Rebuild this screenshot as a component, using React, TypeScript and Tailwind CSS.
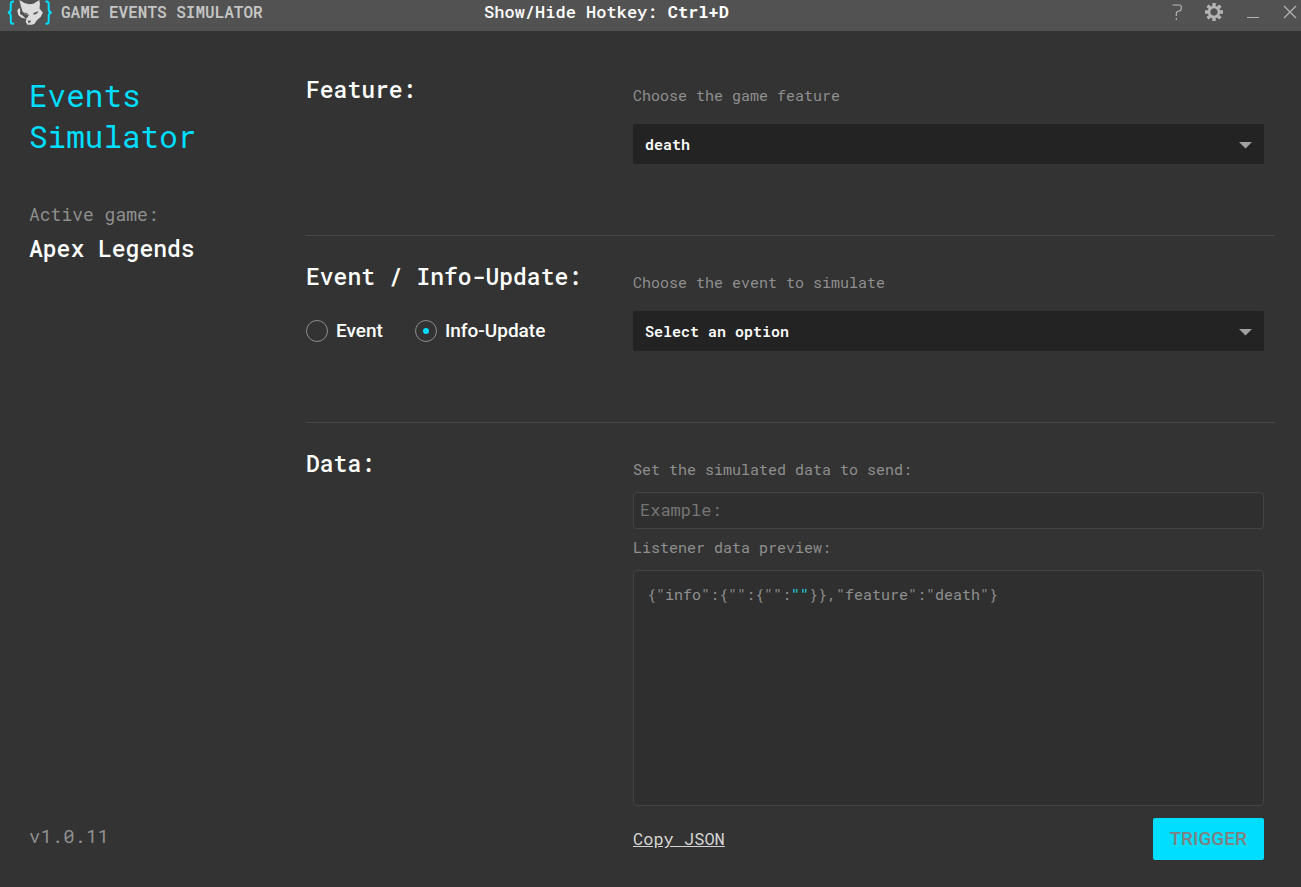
import { useState } from "react";
import type { ReactNode } from "react";

const sans = "font-['Roboto','Liberation_Sans',sans-serif]";

function Logo() {
  return (
    <svg viewBox="0 0 46 28" className="h-7 w-[46px] shrink-0" aria-hidden="true">
      <g fill="none" stroke="#00deff" strokeWidth="2">
        <path d="M7 1.500H5.800Q3.800 1.500 3.800 4v5.200Q3.800 12 1 12.600q2.800.600 2.800 3.400v5.200q0 2.600 2 2.600H7" />
        <path d="M38.500 1.500h1.200q2 0 2 2.500v5.200q0 2.800 2.800 3.400-2.800.6-2.800 3.400v5.200q0 2.600-2 2.600h-1.200" />
      </g>
      <path
        fill="#dcdcdc"
        d="M12.300 0L17.500 3l4.500 1.200 4.300-.4L32.300 0l.7 4-.5 4.500 3.300 4-1.800 4-4.300 4-2.200 3.200-2.500 1.100h-4.500l-1.800-2.800.7-3.700 2.600-3.600-2.800.3-3.700-3.500-1.500-5z"
      />
      <path fill="#dcdcdc" d="M12.500 7.500l-2.200 3 1 4.500 3.200 2.700 4.500 1-3.700-3.400-2.300-1.300.3-3z" />
      <path fill="#525252" d="M13.500 9.500l1.200 3.300 2.600 2.400 3.200 2.300.9-1.900-3.600-1-2.800-2.700z" />
      <path
        fill="#525252"
        d="M17.300 12.200l3.600 1.500.3 1.100-2.500-.6zM25.800 14.300l1.300-1.600 4.200-1.500-1.200 2.200-2.300 1zM20.600 20.500l3.600.2-1 1.900-1.900-.1zM22.200 22.300v1.200h-.6v-1.200z"
      />
    </svg>
  );
}

function Section({ title, extra, children, last }: { title: string; extra?: ReactNode; children: ReactNode; last?: boolean }) {
  return (
    <section className={`flex ${last ? "" : "min-h-[187px] border-b border-[#484848]"}`}>
      <div className="w-[327px] shrink-0 pt-6">
        <h2 className="text-[23px] leading-8 font-medium whitespace-nowrap text-white">{title}</h2>
        {extra}
      </div>
      <div className="min-w-0 flex-1 pt-[34px] pr-[11px]">{children}</div>
    </section>
  );
}

function SelectField({ id, label, options }: { id: string; label: string; options: string[] }) {
  return (
    <div className="flex flex-col">
      <label htmlFor={id} className="text-[15px] leading-6 text-[#8f8f8f]">
        {label}
      </label>
      <div className="relative mt-[17px]">
        <select id={id} className="h-10 w-full appearance-none rounded-xs bg-[#232323] px-3 text-[15px] font-semibold text-white outline-none">
          {options.map((o) => (
            <option key={o}>{o}</option>
          ))}
        </select>
        <svg viewBox="0 0 13 7" className="pointer-events-none absolute top-[18px] right-3 h-[7px] w-[13px]" aria-hidden="true">
          <path d="M0 0h13L6.500 6.500z" fill="#a0a0a0" />
        </svg>
      </div>
    </div>
  );
}

function Radio({ label, checked, onChange }: { label: string; checked: boolean; onChange: () => void }) {
  return (
    <label className={`flex items-center gap-2 text-[19px] leading-6 font-medium text-white ${sans}`}>
      <input
        type="radio"
        name="kind"
        checked={checked}
        onChange={onChange}
        className="grid size-[22px] appearance-none place-items-center rounded-full border border-[#8c8c8c] before:size-[6px] before:rounded-full before:content-[''] checked:before:bg-[#00deff]"
      />
      {label}
    </label>
  );
}

export default function App() {
  const [kind, setKind] = useState("info");
  return (
    <div className="flex min-h-screen flex-col bg-[#333333] font-['Roboto_Mono','DejaVu_Sans_Mono',monospace]">
      <header className="grid h-[31px] grid-cols-[1fr_auto_1fr] items-start bg-[#525252]">
        <div className="flex items-start gap-2 pl-[7px]">
          <Logo />
          <span className="text-[16px] leading-6 font-semibold whitespace-nowrap text-[#c4c4c4]">GAME EVENTS SIMULATOR</span>
        </div>
        <p className="pr-[88px] text-[17px] leading-6 font-medium whitespace-nowrap text-white">
          Show/Hide Hotkey: <b>Ctrl+D</b>
        </p>
        <div className="flex h-6 items-center justify-end gap-[23px] pr-1 text-[#b4b4b4]">
          <button aria-label="Help">
            <svg viewBox="0 0 10 16" className="h-4 w-[10px]" fill="none" stroke="currentColor" strokeWidth="1.200">
              <path d="M.5 1h6.500q2.300 0 2.300 2v1.500q0 2-2.300 2.500-2.700.5-2.700 2.500V12M4.300 14v2" />
            </svg>
          </button>
          <button aria-label="Settings">
            <svg viewBox="-9 -9 18 18" className="size-[18px]" fill="none" stroke="currentColor">
              <circle r="5" strokeWidth="2.600" />
              <path d="M0-9v3M0 9V6M-9 0h3M9 0H6M-6.400-6.400l2.200 2.200M6.400 6.400L4.200 4.200M-6.400 6.400l2.200-2.200M6.400-6.400L4.200-4.200" strokeWidth="3.400" />
            </svg>
          </button>
          <button aria-label="Minimize">
            <svg viewBox="0 0 14 14" className="size-[14px]" stroke="currentColor">
              <path d="M1 12.500h12" />
            </svg>
          </button>
          <button aria-label="Close">
            <svg viewBox="0 0 14 14" className="size-[14px]" stroke="currentColor" strokeWidth="1.200">
              <path d="M1 1l12 12M13 1L1 13" />
            </svg>
          </button>
        </div>
      </header>
      <div className="flex flex-1">
        <aside className="flex w-[306px] shrink-0 flex-col pt-11 pb-[37px] pl-[29px]">
          <h1 className="text-[31px] leading-[41px] text-[#00deff]">
            Events
            <br />
            Simulator
          </h1>
          <p className="mt-[45px] text-[18px] leading-6 text-[#8f8f8f]">Active game:</p>
          <p className="mt-1 text-[23px] leading-9 font-medium text-white">Apex Legends</p>
          <p className="mt-auto text-[19px] leading-7 text-[#8f8f8f]">v1.0.11</p>
        </aside>
        <main className="flex min-w-0 flex-1 flex-col pt-[18px] pr-[26px] pb-[27px]">
          <Section title="Feature:">
            <SelectField id="feature" label="Choose the game feature" options={["death", "kill", "match_state"]} />
          </Section>
          <Section
            title="Event / Info-Update:"
            extra={
              <div className="mt-[27px] flex gap-8">
                <Radio label="Event" checked={kind === "event"} onChange={() => setKind("event")} />
                <Radio label="Info-Update" checked={kind === "info"} onChange={() => setKind("info")} />
              </div>
            }
          >
            <SelectField id="event" label="Choose the event to simulate" options={["Select an option"]} />
          </Section>
          <Section title="Data:" last>
            <div className="flex flex-col">
              <label htmlFor="data" className="text-[15px] leading-6 text-[#8f8f8f]">
                Set the simulated data to send:
              </label>
              <input
                id="data"
                placeholder="Example:"
                className="mt-[11px] h-[37px] rounded-sm border border-[#444444] bg-[#2f2f2f] px-[6px] pb-[3px] text-[17px] text-white outline-none placeholder:text-[#757575]"
              />
              <p className="mt-[6px] text-[15px] leading-6 text-[#8f8f8f]">Listener data preview:</p>
              <pre className="mt-[11px] min-h-[236px] rounded-sm border border-[#444444] bg-[#2f2f2f] px-[13px] py-[11px] font-[inherit] text-[15px] leading-6 text-[#8f8f8f]">
                {'{"info":{"":{"":'}
                <span className="font-medium text-[#1fc5dd]">""</span>
                {'}},"feature":"death"}'}
              </pre>
              <div className="mt-3 flex items-center justify-between">
                <button className="text-[17px] text-[#d4d4d4] underline">Copy JSON</button>
                <button className={`h-[42px] rounded-xs bg-[#00deff] px-[17px] text-[19px] font-medium text-[#808080] ${sans}`}>TRIGGER</button>
              </div>
            </div>
          </Section>
        </main>
      </div>
    </div>
  );
}
